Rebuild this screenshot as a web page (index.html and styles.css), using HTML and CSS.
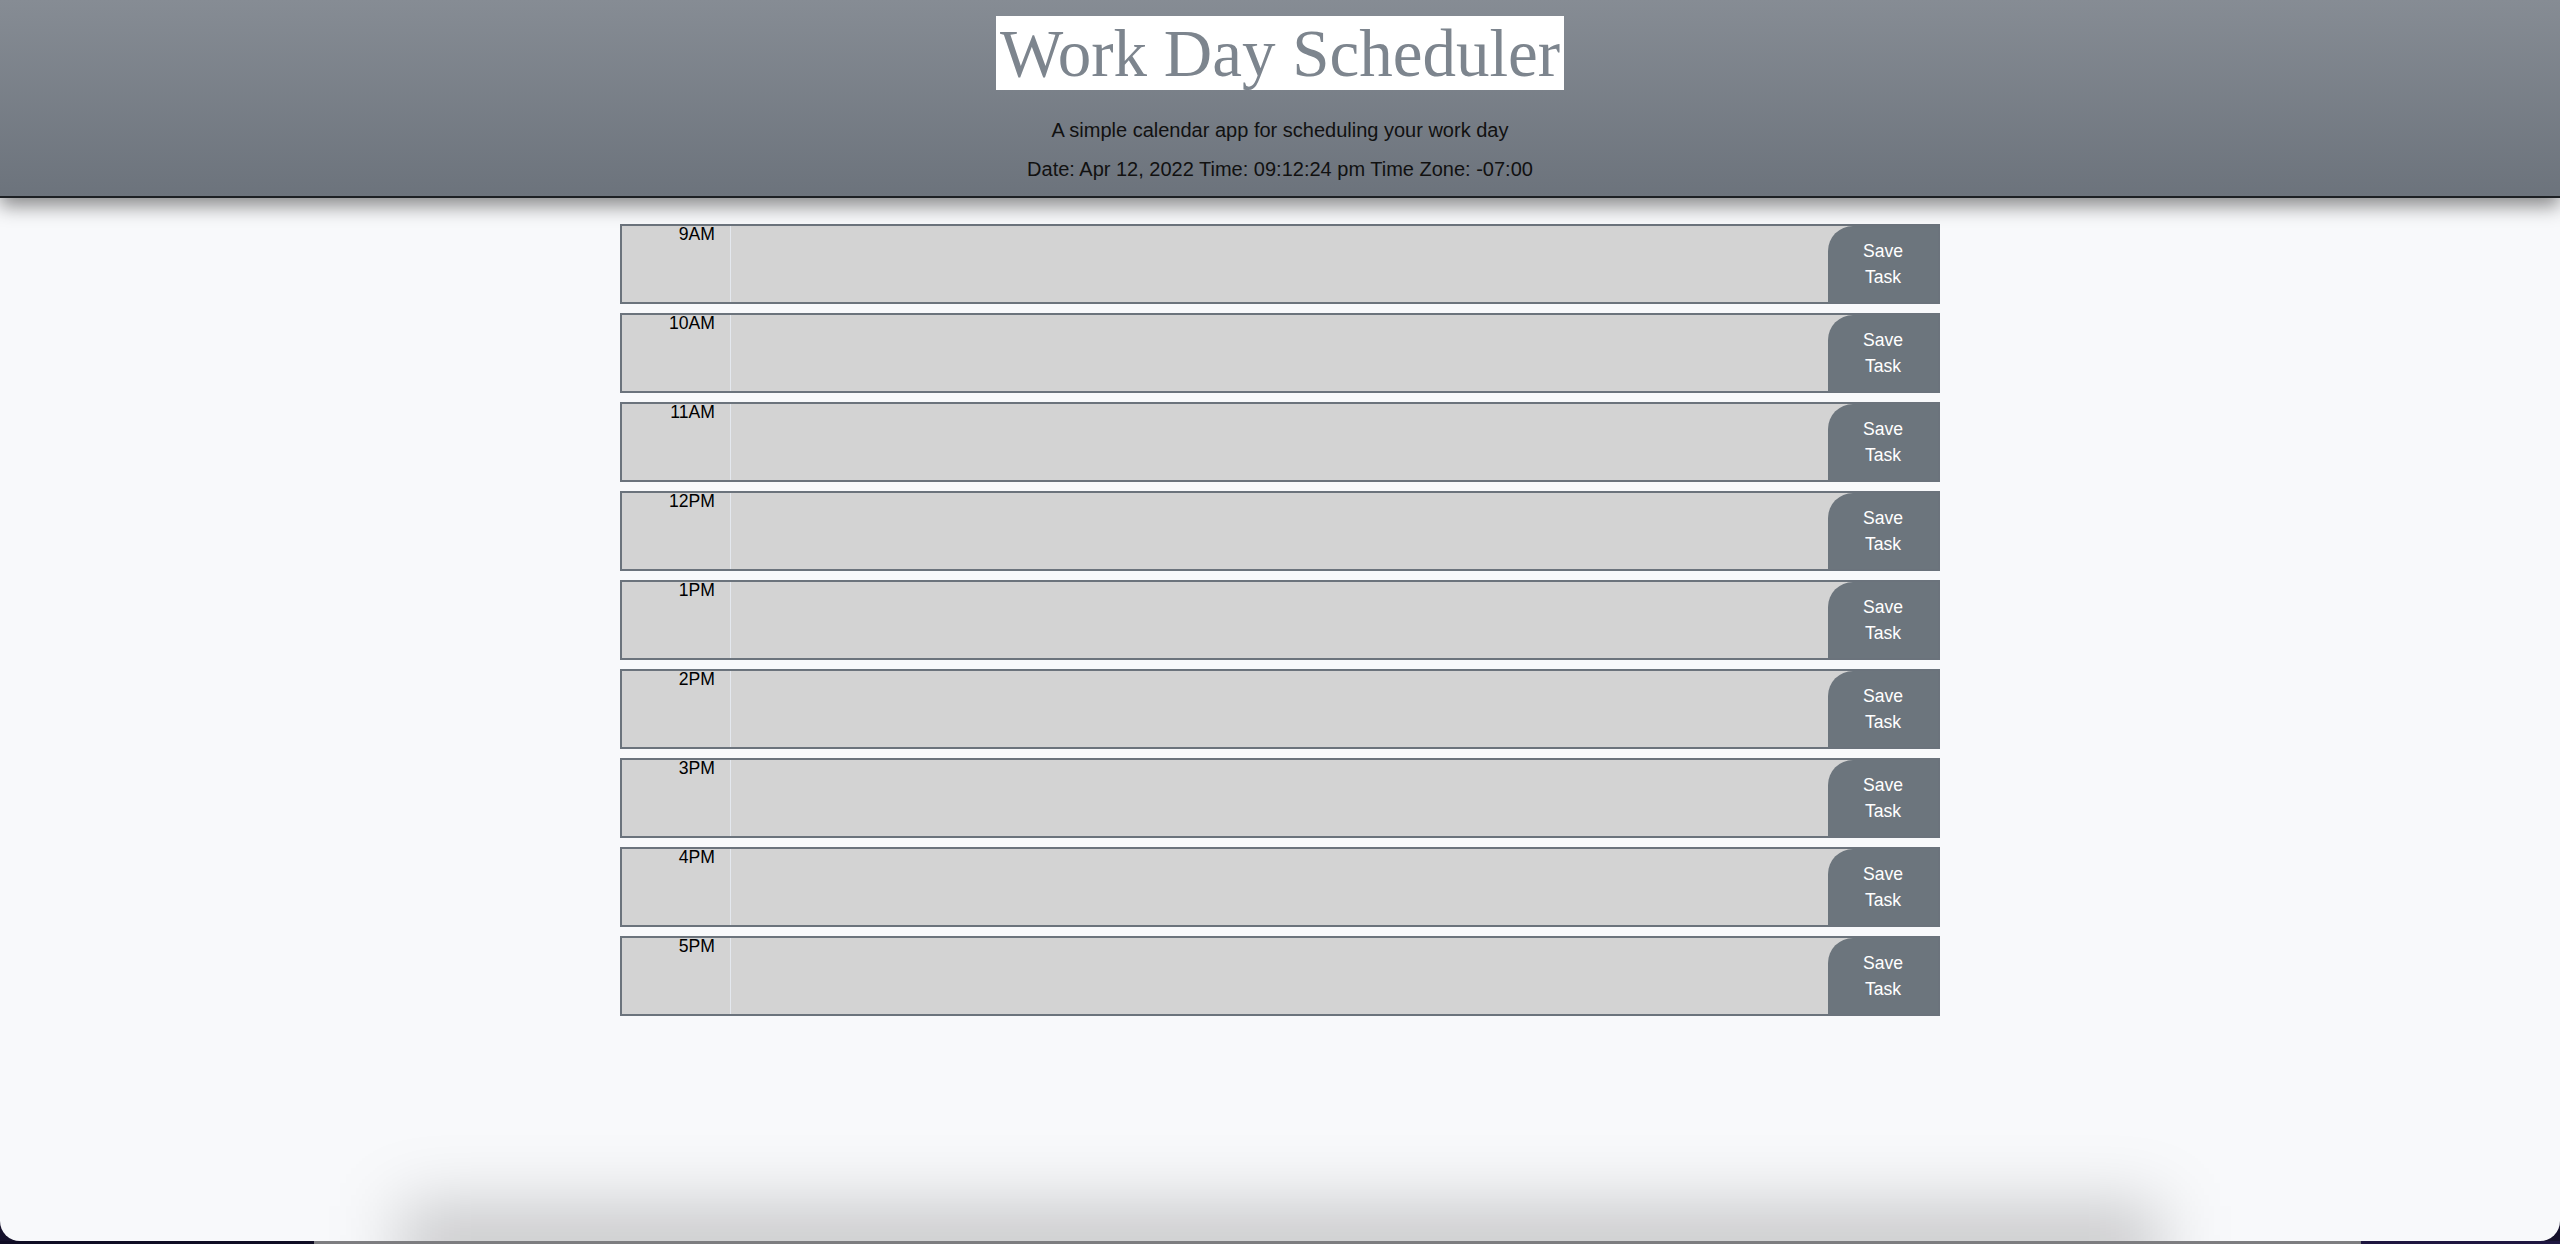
FILE: index.html
```html
<!DOCTYPE html>
<html lang="en">
<head>
<meta charset="utf-8">
<title>Work Day Scheduler</title>
<link rel="stylesheet" href="styles.css">
</head>
<body>
<div class="window">
  <header class="jumbotron">
    <h1 class="display">Work Day Scheduler</h1>
    <p class="lead">A simple calendar app for scheduling your work day</p>
    <p class="lead" id="currentDay">Date: Apr 12, 2022 Time: 09:12:24 pm Time Zone: -07:00</p>
  </header>
  <main class="container">
    <div class="time-block"><div class="hour">9AM</div><textarea class="description"></textarea><button class="saveBtn">Save<br>Task</button></div>
    <div class="time-block"><div class="hour">10AM</div><textarea class="description"></textarea><button class="saveBtn">Save<br>Task</button></div>
    <div class="time-block"><div class="hour">11AM</div><textarea class="description"></textarea><button class="saveBtn">Save<br>Task</button></div>
    <div class="time-block"><div class="hour">12PM</div><textarea class="description"></textarea><button class="saveBtn">Save<br>Task</button></div>
    <div class="time-block"><div class="hour">1PM</div><textarea class="description"></textarea><button class="saveBtn">Save<br>Task</button></div>
    <div class="time-block"><div class="hour">2PM</div><textarea class="description"></textarea><button class="saveBtn">Save<br>Task</button></div>
    <div class="time-block"><div class="hour">3PM</div><textarea class="description"></textarea><button class="saveBtn">Save<br>Task</button></div>
    <div class="time-block"><div class="hour">4PM</div><textarea class="description"></textarea><button class="saveBtn">Save<br>Task</button></div>
    <div class="time-block"><div class="hour">5PM</div><textarea class="description"></textarea><button class="saveBtn">Save<br>Task</button></div>
  </main>
  <div class="dock-shadow"></div>
</div>
<div class="bottom-strip"><div class="strip-left"></div><div class="strip-mid"></div><div class="strip-right"></div></div>
</body>
</html>
```

FILE: styles.css
```css
html, body {
  margin: 0;
  padding: 0;
}
body {
  background: #15112b;
  font-family: "Liberation Sans", Arial, sans-serif;
  line-height: 1.5;
  color: #111;
  overflow: hidden;
}
.window {
  position: relative;
  height: 1241px;
  background: #f8f9fb;
  border-radius: 0 0 20px 20px;
  overflow: hidden;
}
.jumbotron {
  position: relative;
  z-index: 2;
  height: 198px;
  box-sizing: border-box;
  padding-top: 16px;
  background: linear-gradient(to bottom, #868c94, #6c737c);
  border-bottom: 2px solid #1d2024;
  box-shadow: 0 8px 18px rgba(0, 0, 0, 0.45);
  display: flex;
  flex-direction: column;
  align-items: center;
}
.display {
  margin: 0;
  background: #ffffff;
  color: #7d858e;
  font-family: "Liberation Serif", "Times New Roman", serif;
  font-weight: normal;
  font-size: 67px;
  line-height: 74px;
  height: 74px;
  padding: 0 4px;
}
.lead {
  margin: 0;
  font-size: 20px;
  line-height: 24px;
  color: #111;
}
.display + .lead {
  margin-top: 28px;
}
.lead + .lead {
  margin-top: 15px;
}
.container {
  width: 1320px;
  margin: 26px auto 0;
  display: flex;
  flex-direction: column;
  gap: 9px;
}
.time-block {
  height: 80px;
  box-sizing: border-box;
  border: 2px solid #6b737c;
  background: #d3d3d3;
  display: grid;
  grid-template-columns: 108px 1fr 110px;
}
.hour {
  font-size: 17.6px;
  line-height: 1;
  text-align: right;
  padding-right: 15px;
  color: #000;
}
.description {
  margin: 0;
  border: none;
  border-left: 1px solid #e4e8ee;
  background: #d3d3d3;
  resize: none;
  padding: 0;
  font-family: inherit;
}
.saveBtn {
  margin: 0;
  border: none;
  padding: 0;
  background: #6c757d;
  color: #ffffff;
  font-family: "Liberation Sans", Arial, sans-serif;
  font-size: 17.6px;
  line-height: 26px;
  border-radius: 25px 0 0 0;
}
.dock-shadow {
  position: absolute;
  left: 400px;
  right: 400px;
  bottom: -45px;
  height: 80px;
  background: rgba(0, 0, 0, 0.2);
  filter: blur(34px);
}
.bottom-strip {
  height: 3px;
  display: flex;
}
.strip-left {
  width: 314px;
  background: #0f0c24;
}
.strip-mid {
  width: 2047px;
  background: #7d7d80;
}
.strip-right {
  flex: 1;
  background: #1e1640;
}
```
